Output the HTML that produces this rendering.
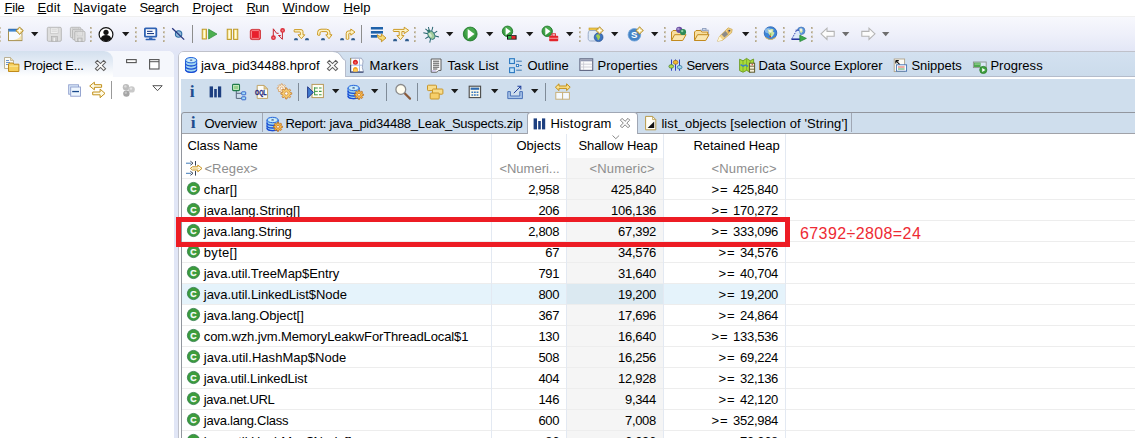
<!DOCTYPE html>
<html><head><meta charset="utf-8"><title>Eclipse Memory Analyzer</title>
<style>

html,body{margin:0;padding:0}
body{width:1135px;height:438px;overflow:hidden;background:#fff;position:relative;font-family:"Liberation Sans", "Noto Sans CJK SC", sans-serif;font-size:13px;color:#000}
.b{position:absolute}
.ic{position:absolute;overflow:visible}
.t{position:absolute;white-space:pre;line-height:16px;height:16px;font-size:13px}
.g{color:#8e8e8e}
u{text-decoration:underline;text-underline-offset:1px}

</style></head><body>
<div class="b" style="left:0px;top:0px;width:1135px;height:16px;background:#fff;"></div>
<div class="b" style="left:0px;top:16px;width:1135px;height:1px;background:#f0f0f0;"></div>
<div class="t " style="left:4.4px;top:0px;letter-spacing:-0.163px;"><u>F</u>ile</div>
<div class="t " style="left:37.4px;top:0px;letter-spacing:0.223px;"><u>E</u>dit</div>
<div class="t " style="left:73.4px;top:0px;letter-spacing:0.246px;"><u>N</u>avigate</div>
<div class="t " style="left:139.4px;top:0px;letter-spacing:-0.317px;">Se<u>a</u>rch</div>
<div class="t " style="left:192.4px;top:0px;letter-spacing:-0.024px;"><u>P</u>roject</div>
<div class="t " style="left:246.4px;top:0px;letter-spacing:-0.520px;"><u>R</u>un</div>
<div class="t " style="left:282.4px;top:0px;letter-spacing:0.175px;"><u>W</u>indow</div>
<div class="t " style="left:343.4px;top:0px;letter-spacing:0.138px;"><u>H</u>elp</div>
<div class="b" style="left:0px;top:17px;width:1135px;height:35px;background:linear-gradient(to bottom,#f7f8fd 0%,#eef0fa 50%,#e2e6f6 100%);"></div>
<div class="b" style="left:0px;top:52px;width:1135px;height:386px;background:#e1e6f6;"></div>
<svg class="ic" style="left:-0.8px;top:27px" width="2" height="15" viewBox="0 0 2 15"><rect x="0" y="0" width="2" height="1.8" fill="#b1a68b"/><rect x="1" y="0" width="1" height="1.8" fill="#cfc6b0"/><rect x="0" y="4.4" width="2" height="1.8" fill="#b1a68b"/><rect x="1" y="4.4" width="1" height="1.8" fill="#cfc6b0"/><rect x="0" y="8.8" width="2" height="1.8" fill="#b1a68b"/><rect x="1" y="8.8" width="1" height="1.8" fill="#cfc6b0"/><rect x="0" y="13.2" width="2" height="1.8" fill="#b1a68b"/><rect x="1" y="13.2" width="1" height="1.8" fill="#cfc6b0"/></svg>
<svg class="ic" style="left:8px;top:26px" width="16" height="16" viewBox="0 0 16 16"><rect x="0.5" y="3.4" width="13.4" height="11.2" fill="#f7fbff" stroke="#a8914e" stroke-width="1"/><rect x="0.4" y="2.9" width="13.6" height="2.7" fill="#3f86d0"/><rect x="0.4" y="2.9" width="13.6" height="0.8" fill="#2f6cb8"/><path d="M13.4 8.2v5.9h-9.4c5.2-0.4 8.4-2.6 9.4-5.9z" fill="#f4e3ae"/><path d="M11.6 0.9000000000000004Q13.1 3.2 15.399999999999999 4.7Q13.1 6.2 11.6 8.5Q10.1 6.2 7.8 4.7Q10.1 3.2 11.6 0.9000000000000004z" fill="#f2d57e" stroke="#b08a28" stroke-width="0.9"/><path d="M9.5 4.7h4.2M11.6 2.6v4.2" stroke="#fffdf0" stroke-width="1.3"/></svg>
<svg class="ic" style="left:31px;top:32px" width="8" height="5" viewBox="0 0 8 5"><path d="M0 0h7.4l-3.7 4.2z" fill="#1a1a1a"/></svg>
<svg class="ic" style="left:46px;top:26px" width="16" height="16" viewBox="0 0 16 16"><path d="M2.5 1.3H14.100000000000001Q15.3 1.3 15.3 2.5V14.100000000000001Q15.3 15.3 14.100000000000001 15.3H2.5Q1.3 15.3 1.3 14.100000000000001V2.5Q1.3 1.3 2.5 1.3z" fill="#dedede" stroke="#b2b2b2" stroke-width="0.9"/><rect x="4.5" y="1.9" width="7.6" height="5.4" fill="#efefef" stroke="#c2c2c2" stroke-width="0.6"/><path d="M5.7 3.7h5.2M5.7 5.3h5.2" stroke="#cfcfcf" stroke-width="0.7"/><rect x="5.3" y="10.5" width="6.0" height="4.6" fill="#cdcdcd" stroke="#ababab" stroke-width="0.6"/><rect x="7.5" y="11.700000000000001" width="1.5" height="3.4" fill="#efefef"/></svg>
<svg class="ic" style="left:69px;top:26px" width="16" height="16" viewBox="0 0 16 16"><path d="M2.5999999999999996 1.3H10.600000000000001Q11.8 1.3 11.8 2.5V10.500000000000002Q11.8 11.700000000000001 10.600000000000001 11.700000000000001H2.5999999999999996Q1.4 11.700000000000001 1.4 10.500000000000002V2.5Q1.4 1.3 2.5999999999999996 1.3z" fill="#dedede" stroke="#b2b2b2" stroke-width="0.9"/><rect x="3.777142857142857" y="1.9" width="5.645714285714286" height="4.011428571428572" fill="#e4e4e4" stroke="#c2c2c2" stroke-width="0.6"/><path d="M4.668571428571429 3.0828571428571427h3.862857142857143M4.668571428571429 4.271428571428571h3.862857142857143" stroke="#cfcfcf" stroke-width="0.7"/><rect x="4.371428571428572" y="8.134285714285713" width="4.457142857142857" height="3.417142857142857" fill="#cdcdcd" stroke="#ababab" stroke-width="0.6"/><rect x="6.005714285714285" y="9.025714285714287" width="1.1142857142857143" height="2.525714285714286" fill="#e4e4e4"/><path d="M4.8 3.3H12.8Q14.0 3.3 14.0 4.5V12.5Q14.0 13.7 12.8 13.7H4.8Q3.6 13.7 3.6 12.5V4.5Q3.6 3.3 4.8 3.3z" fill="#dedede" stroke="#b2b2b2" stroke-width="0.9"/><rect x="5.977142857142857" y="3.9" width="5.645714285714286" height="4.011428571428572" fill="#e4e4e4" stroke="#c2c2c2" stroke-width="0.6"/><path d="M6.868571428571429 5.082857142857143h3.862857142857143M6.868571428571429 6.271428571428571h3.862857142857143" stroke="#cfcfcf" stroke-width="0.7"/><rect x="6.571428571428571" y="10.134285714285713" width="4.457142857142857" height="3.417142857142857" fill="#cdcdcd" stroke="#ababab" stroke-width="0.6"/><rect x="8.205714285714286" y="11.025714285714287" width="1.1142857142857143" height="2.525714285714286" fill="#e4e4e4"/><path d="M7.0 5.3H14.8Q16.0 5.3 16.0 6.5V14.3Q16.0 15.5 14.8 15.5H7.0Q5.8 15.5 5.8 14.3V6.5Q5.8 5.3 7.0 5.3z" fill="#dedede" stroke="#b2b2b2" stroke-width="0.9"/><rect x="8.131428571428572" y="5.8999999999999995" width="5.5371428571428565" height="3.934285714285714" fill="#efefef" stroke="#c2c2c2" stroke-width="0.6"/><path d="M9.005714285714285 7.048571428571428h3.7885714285714287M9.005714285714285 8.214285714285714h3.7885714285714287" stroke="#cfcfcf" stroke-width="0.7"/><rect x="8.714285714285714" y="12.002857142857142" width="4.371428571428571" height="3.351428571428571" fill="#cdcdcd" stroke="#ababab" stroke-width="0.6"/><rect x="10.317142857142857" y="12.877142857142857" width="1.0928571428571427" height="2.477142857142857" fill="#efefef"/></svg>
<svg class="ic" style="left:90.2px;top:27px" width="2" height="15" viewBox="0 0 2 15"><rect x="0" y="0" width="2" height="1.8" fill="#b1a68b"/><rect x="1" y="0" width="1" height="1.8" fill="#cfc6b0"/><rect x="0" y="4.4" width="2" height="1.8" fill="#b1a68b"/><rect x="1" y="4.4" width="1" height="1.8" fill="#cfc6b0"/><rect x="0" y="8.8" width="2" height="1.8" fill="#b1a68b"/><rect x="1" y="8.8" width="1" height="1.8" fill="#cfc6b0"/><rect x="0" y="13.2" width="2" height="1.8" fill="#b1a68b"/><rect x="1" y="13.2" width="1" height="1.8" fill="#cfc6b0"/></svg>
<svg class="ic" style="left:98px;top:26px" width="16" height="16" viewBox="0 0 16 16"><circle cx="8" cy="8.5" r="6.9" fill="#fff" stroke="#111" stroke-width="1.2"/><circle cx="8" cy="6.3" r="2.6" fill="#111"/><path d="M2.8 12.6c0.8-3 2.6-3.6 5.2-3.6s4.4 0.6 5.2 3.6c-1.5 1.8-3.2 2.6-5.2 2.6s-3.7-0.8-5.2-2.6z" fill="#111"/></svg>
<svg class="ic" style="left:122px;top:32px" width="8" height="5" viewBox="0 0 8 5"><path d="M0 0h7.4l-3.7 4.2z" fill="#1a1a1a"/></svg>
<svg class="ic" style="left:135.3px;top:27px" width="2" height="15" viewBox="0 0 2 15"><rect x="0" y="0" width="2" height="1.8" fill="#b1a68b"/><rect x="1" y="0" width="1" height="1.8" fill="#cfc6b0"/><rect x="0" y="4.4" width="2" height="1.8" fill="#b1a68b"/><rect x="1" y="4.4" width="1" height="1.8" fill="#cfc6b0"/><rect x="0" y="8.8" width="2" height="1.8" fill="#b1a68b"/><rect x="1" y="8.8" width="1" height="1.8" fill="#cfc6b0"/><rect x="0" y="13.2" width="2" height="1.8" fill="#b1a68b"/><rect x="1" y="13.2" width="1" height="1.8" fill="#cfc6b0"/></svg>
<svg class="ic" style="left:143px;top:26px" width="16" height="16" viewBox="0 0 16 16"><rect x="1" y="1.5" width="13.2" height="10" rx="1.6" fill="#2f62b3"/><rect x="2.8" y="3.2" width="9.6" height="6.6" fill="#fafcff"/><rect x="4" y="4.8" width="5.5" height="1.1" fill="#1f3f86"/><rect x="4" y="7" width="7" height="1.1" fill="#1f3f86"/><rect x="6" y="11.5" width="3.4" height="1.4" fill="#2f62b3"/><rect x="2.6" y="12.7" width="10" height="1.6" rx="0.6" fill="#2f62b3"/></svg>
<svg class="ic" style="left:163.2px;top:27px" width="2" height="15" viewBox="0 0 2 15"><rect x="0" y="0" width="2" height="1.8" fill="#b1a68b"/><rect x="1" y="0" width="1" height="1.8" fill="#cfc6b0"/><rect x="0" y="4.4" width="2" height="1.8" fill="#b1a68b"/><rect x="1" y="4.4" width="1" height="1.8" fill="#cfc6b0"/><rect x="0" y="8.8" width="2" height="1.8" fill="#b1a68b"/><rect x="1" y="8.8" width="1" height="1.8" fill="#cfc6b0"/><rect x="0" y="13.2" width="2" height="1.8" fill="#b1a68b"/><rect x="1" y="13.2" width="1" height="1.8" fill="#cfc6b0"/></svg>
<svg class="ic" style="left:170px;top:26px" width="16" height="16" viewBox="0 0 16 16"><circle cx="8.6" cy="8" r="3.2" fill="#8fb9d9" stroke="#2f6ea5" stroke-width="1.1"/><path d="M2.2 2.2l12 11.4" stroke="#27357e" stroke-width="1.3" fill="none"/></svg>
<div class="b" style="left:192px;top:25px;width:1px;height:18px;background:#8d8d8d;"></div>
<svg class="ic" style="left:201px;top:26px" width="16" height="16" viewBox="0 0 16 16"><rect x="1.2" y="3.2" width="4.2" height="9.8" fill="#f7e389" stroke="#b8921e" stroke-width="0.9"/><rect x="2.6" y="4.2" width="1.4" height="7.8" fill="#fffbe0"/><path d="M7.6 3.2l8.4 4.9l-8.4 4.9z" fill="#4caf50" stroke="#2e8b3a" stroke-width="0.7"/></svg>
<svg class="ic" style="left:225px;top:26px" width="16" height="16" viewBox="0 0 16 16"><rect x="2.2" y="3.2" width="4.2" height="10.2" fill="#f7e389" stroke="#b8921e" stroke-width="0.9"/><rect x="3.6" y="4.2" width="1.4" height="8.2" fill="#fffbe0"/><rect x="8.6" y="3.2" width="4.2" height="10.2" fill="#f7e389" stroke="#b8921e" stroke-width="0.9"/><rect x="10" y="4.2" width="1.4" height="8.2" fill="#fffbe0"/></svg>
<svg class="ic" style="left:248px;top:26px" width="16" height="16" viewBox="0 0 16 16"><rect x="2.3" y="3.4" width="10.2" height="10.2" rx="1.6" fill="#e8202c" stroke="#d03a3e" stroke-width="0.9"/><rect x="3.5" y="4.6" width="7.8" height="7.8" rx="0.6" fill="none" stroke="#f7a2a4" stroke-width="0.8"/></svg>
<svg class="ic" style="left:270px;top:26px" width="16" height="16" viewBox="0 0 16 16"><path d="M3.3 11.7V2.8L6.6 7.3H8.6M8.4 9.5H10.8M8.6 9.5L12.4 13.3V4.4" stroke="#c8242e" stroke-width="1" fill="none"/><circle cx="3.45" cy="11.7" r="2.4" fill="#dc2e3a"/><circle cx="3.45" cy="11.7" r="1" fill="#f08088"/><circle cx="12.6" cy="4.4" r="2.4" fill="#dc2e3a"/><circle cx="12.6" cy="4.4" r="1" fill="#f08088"/></svg>
<svg class="ic" style="left:293px;top:26px" width="16" height="16" viewBox="0 0 16 16"><path d="M1.4 3.6H8Q10 3.6 10 5.6V8.8H11.8L8.4 12.7L5 8.8H7.4V6.6Q7.4 6 6.8 6H1.4Q0.7 4.8 1.4 3.6z" fill="#fdf3c6" stroke="#c9961c" stroke-width="0.95"/><path d="M0.9 14.3a2.1 2.4 0 0 1 4.2 0z" fill="#2f5c8e"/><path d="M11.9 14.3a2.1 2.4 0 0 1 4.2 0z" fill="#2f5c8e"/></svg>
<svg class="ic" style="left:317px;top:26px" width="16" height="16" viewBox="0 0 16 16"><path d="M0.6 9V6.4Q0.6 3.2 4 3.2H9.4Q13 3.2 13 6.6V8.8H15L12 12.7L8.8 8.8H10.6V7Q10.6 5.6 9 5.6H4.6Q3 5.6 3 7V9Q1.8 9.8 0.6 9z" fill="#fdf3c6" stroke="#c9961c" stroke-width="0.95"/><path d="M3.9 14.3a2.1 2.4 0 0 1 4.2 0z" fill="#2f5c8e"/></svg>
<svg class="ic" style="left:340px;top:26px" width="16" height="16" viewBox="0 0 16 16"><path d="M6.2 13V7.4Q6.2 4.9 8.8 4.9H10.8V3L15 6.1L10.8 9.2V7.3H9.4Q8.8 7.3 8.8 8V13Q7.5 13.8 6.2 13z" fill="#fdf3c6" stroke="#c9961c" stroke-width="0.95"/><path d="M0 14.3a2.1 2.4 0 0 1 4.2 0z" fill="#2f5c8e"/><path d="M11 14.3a2.1 2.4 0 0 1 4.2 0z" fill="#2f5c8e"/></svg>
<div class="b" style="left:361px;top:25px;width:1px;height:18px;background:#8d8d8d;"></div>
<svg class="ic" style="left:370px;top:26px" width="16" height="16" viewBox="0 0 16 16"><rect x="0.9" y="1" width="12.1" height="2.5" fill="#1f62aa"/><rect x="0.9" y="5" width="12.1" height="2.6" fill="#1f62aa"/><rect x="0.9" y="9" width="6.4" height="2.7" fill="#1f62aa"/><path d="M7.4 8.6Q8.2 10.6 11.4 10.4V8L16 12L11.4 15.8V13.4Q7.6 13.6 7.4 8.6z" fill="#f9dc78" stroke="#c08c1a" stroke-width="0.9"/></svg>
<svg class="ic" style="left:392px;top:26px" width="16" height="16" viewBox="0 0 16 16"><path d="M1.6 3.4H12.2V1.2L16.8 4.4L12.2 7.6V5.5H9.9V9.6H12L8.5 13.6L4.9 9.6H7.2V5.5H1.6Q0.8 4.4 1.6 3.4z" fill="#fdf3c6" stroke="#c9961c" stroke-width="0.95"/><path d="M1 15.2a2.1 2.4 0 0 1 4.2 0z" fill="#2f5c8e"/><path d="M12.9 15.2a2.1 2.4 0 0 1 4.2 0z" fill="#2f5c8e"/></svg>
<svg class="ic" style="left:414.2px;top:27px" width="2" height="15" viewBox="0 0 2 15"><rect x="0" y="0" width="2" height="1.8" fill="#b1a68b"/><rect x="1" y="0" width="1" height="1.8" fill="#cfc6b0"/><rect x="0" y="4.4" width="2" height="1.8" fill="#b1a68b"/><rect x="1" y="4.4" width="1" height="1.8" fill="#cfc6b0"/><rect x="0" y="8.8" width="2" height="1.8" fill="#b1a68b"/><rect x="1" y="8.8" width="1" height="1.8" fill="#cfc6b0"/><rect x="0" y="13.2" width="2" height="1.8" fill="#b1a68b"/><rect x="1" y="13.2" width="1" height="1.8" fill="#cfc6b0"/></svg>
<svg class="ic" style="left:423px;top:26px" width="16" height="16" viewBox="0 0 16 16"><g transform="rotate(-32 8 8.5)"><path d="M2.4 3l3.6 3.4M13.6 3l-3.6 3.4M1 9h4M15 9h-4M2.6 14.8l3.2-3.4M13.4 14.8l-3.2-3.4M6.2 0.8l1.2 3.4M9.8 0.8l-1.2 3.4" stroke="#1f5f68" stroke-width="0.95" fill="none"/><ellipse cx="8" cy="9.2" rx="3.1" ry="4.5" fill="#a2cc9c" stroke="#236e72" stroke-width="0.9"/><ellipse cx="7.2" cy="8.4" rx="1.1" ry="2.4" fill="#d4ead0"/><circle cx="8" cy="4.6" r="1.5" fill="#2f7a70"/></g></svg>
<svg class="ic" style="left:446px;top:32px" width="8" height="5" viewBox="0 0 8 5"><path d="M0 0h7.4l-3.7 4.2z" fill="#1a1a1a"/></svg>
<svg class="ic" style="left:462px;top:26px" width="16" height="16" viewBox="0 0 16 16"><circle cx="8.2" cy="8" r="6.9" fill="#379a3f" stroke="#22782e" stroke-width="0.9"/><circle cx="8.2" cy="6.62" r="5.106" fill="#52b054" opacity="0.65"/><path d="M5.715999999999999 2.894l6.7620000000000005 5.106l-6.7620000000000005 5.106z" fill="#fff"/></svg>
<svg class="ic" style="left:486px;top:32px" width="8" height="5" viewBox="0 0 8 5"><path d="M0 0h7.4l-3.7 4.2z" fill="#1a1a1a"/></svg>
<svg class="ic" style="left:502px;top:26px" width="16" height="16" viewBox="0 0 16 16"><circle cx="5.5" cy="5.3" r="5.2" fill="#379a3f" stroke="#22782e" stroke-width="0.9"/><circle cx="5.5" cy="4.26" r="3.848" fill="#52b054" opacity="0.65"/><path d="M3.628 1.452l5.096 3.848l-5.096 3.848z" fill="#fff"/><rect x="5" y="9.2" width="9.6" height="4.4" fill="#111"/><rect x="6" y="10" width="3.6" height="2.8" fill="#2fb84a"/><rect x="9.6" y="10" width="4" height="2.8" fill="#e3242b"/></svg>
<svg class="ic" style="left:526px;top:32px" width="8" height="5" viewBox="0 0 8 5"><path d="M0 0h7.4l-3.7 4.2z" fill="#1a1a1a"/></svg>
<svg class="ic" style="left:541px;top:26px" width="16" height="16" viewBox="0 0 16 16"><circle cx="6.2" cy="5.3" r="5.2" fill="#379a3f" stroke="#22782e" stroke-width="0.9"/><circle cx="6.2" cy="4.26" r="3.848" fill="#52b054" opacity="0.65"/><path d="M4.328 1.452l5.096 3.848l-5.096 3.848z" fill="#fff"/><rect x="8.2" y="9.8" width="9" height="5.4" rx="0.8" fill="#e3242b"/><rect x="11" y="7.8" width="3.4" height="2.4" fill="none" stroke="#e3242b" stroke-width="1"/><rect x="8.2" y="11.8" width="9" height="0.9" fill="#f9b0b0"/></svg>
<svg class="ic" style="left:566px;top:32px" width="8" height="5" viewBox="0 0 8 5"><path d="M0 0h7.4l-3.7 4.2z" fill="#1a1a1a"/></svg>
<svg class="ic" style="left:579.4px;top:27px" width="2" height="15" viewBox="0 0 2 15"><rect x="0" y="0" width="2" height="1.8" fill="#b1a68b"/><rect x="1" y="0" width="1" height="1.8" fill="#cfc6b0"/><rect x="0" y="4.4" width="2" height="1.8" fill="#b1a68b"/><rect x="1" y="4.4" width="1" height="1.8" fill="#cfc6b0"/><rect x="0" y="8.8" width="2" height="1.8" fill="#b1a68b"/><rect x="1" y="8.8" width="1" height="1.8" fill="#cfc6b0"/><rect x="0" y="13.2" width="2" height="1.8" fill="#b1a68b"/><rect x="1" y="13.2" width="1" height="1.8" fill="#cfc6b0"/></svg>
<svg class="ic" style="left:588px;top:26px" width="16" height="16" viewBox="0 0 16 16"><rect x="1" y="2" width="9" height="2.2" fill="#f0c84a" stroke="#b8921e" stroke-width="0.6"/><path d="M1.6 4.5c-1.2 1-1.4 2-1.4 4v4c0 1.5 0.8 2.5 2.4 2.5h5.6c1.6 0 2.4-1 2.4-2.5v-4c0-2-0.2-3-1.4-4z" fill="#dfe9f6" stroke="#8ea4c4" stroke-width="0.9"/><circle cx="10.6" cy="11.2" r="4.4" fill="#3d74c0" stroke="#27508e" stroke-width="0.7"/><path d="M8.5 9c1-1 2.5-0.8 3 0.2s1 1.5 0.4 2.6s-1 2.6-1.8 2.2s-0.4-1.8-1.2-2.6s-1-1.6-0.4-2.4z" fill="#9fcf4f"/><path d="M11.6 0.7000000000000002Q13.1 3.0 15.399999999999999 4.5Q13.1 6.0 11.6 8.3Q10.1 6.0 7.8 4.5Q10.1 3.0 11.6 0.7000000000000002z" fill="#f2d57e" stroke="#b08a28" stroke-width="0.9"/><path d="M9.5 4.5h4.2M11.6 2.4v4.2" stroke="#fffdf0" stroke-width="1.3"/></svg>
<svg class="ic" style="left:611px;top:32px" width="8" height="5" viewBox="0 0 8 5"><path d="M0 0h7.4l-3.7 4.2z" fill="#1a1a1a"/></svg>
<svg class="ic" style="left:627px;top:26px" width="16" height="16" viewBox="0 0 16 16"><circle cx="7.4" cy="8.8" r="6.3" fill="#4684c6" stroke="#6fa3d9" stroke-width="0.8"/><text x="7.2" y="12.3" font-family="Liberation Sans, sans-serif" font-weight="bold" font-size="9.6" fill="#fff" text-anchor="middle">S</text><path d="M12.6 0.7000000000000002Q14.1 3.0 16.4 4.5Q14.1 6.0 12.6 8.3Q11.1 6.0 8.8 4.5Q11.1 3.0 12.6 0.7000000000000002z" fill="#f2d57e" stroke="#b08a28" stroke-width="0.9"/><path d="M10.5 4.5h4.2M12.6 2.4v4.2" stroke="#fffdf0" stroke-width="1.3"/></svg>
<svg class="ic" style="left:651px;top:32px" width="8" height="5" viewBox="0 0 8 5"><path d="M0 0h7.4l-3.7 4.2z" fill="#1a1a1a"/></svg>
<svg class="ic" style="left:664.3px;top:27px" width="2" height="15" viewBox="0 0 2 15"><rect x="0" y="0" width="2" height="1.8" fill="#b1a68b"/><rect x="1" y="0" width="1" height="1.8" fill="#cfc6b0"/><rect x="0" y="4.4" width="2" height="1.8" fill="#b1a68b"/><rect x="1" y="4.4" width="1" height="1.8" fill="#cfc6b0"/><rect x="0" y="8.8" width="2" height="1.8" fill="#b1a68b"/><rect x="1" y="8.8" width="1" height="1.8" fill="#cfc6b0"/><rect x="0" y="13.2" width="2" height="1.8" fill="#b1a68b"/><rect x="1" y="13.2" width="1" height="1.8" fill="#cfc6b0"/></svg>
<svg class="ic" style="left:671px;top:26px" width="16" height="16" viewBox="0 0 16 16"><path d="M0.5 14.5v-8.5l1.5-1.5h4.62l1.2 1.5h5.88v2.4" fill="#f8dfa0" stroke="#c28a1e" stroke-width="1"/><path d="M0.5 14.5l3.08-5.8h11.479999999999999l-3.36 5.8z" fill="#fbe7b0" stroke="#c28a1e" stroke-width="1"/><circle cx="8.2" cy="3.8" r="3.1" fill="#6a4fa3"/><circle cx="7.4" cy="2.9" r="1.2" fill="#a995d0"/><circle cx="12" cy="6" r="3.1" fill="#2e8b57"/><circle cx="11.2" cy="5.1" r="1.2" fill="#8fd0a5"/></svg>
<svg class="ic" style="left:694px;top:26px" width="16" height="16" viewBox="0 0 16 16"><rect x="6.4" y="4.2" width="7.8" height="5.6" fill="#fbfcff" stroke="#8496b8" stroke-width="0.9"/><rect x="8.6" y="2.4" width="3.4" height="1.8" fill="#dfe6f4" stroke="#8496b8" stroke-width="0.8"/><path d="M0.5 14.5v-8.5l1.5-1.5h4.62l1.2 1.5h5.88v2.4" fill="#f8dfa0" stroke="#c28a1e" stroke-width="1"/><path d="M0.5 14.5l3.08-5.8h11.479999999999999l-3.36 5.8z" fill="#fbe7b0" stroke="#c28a1e" stroke-width="1"/></svg>
<svg class="ic" style="left:717px;top:26px" width="16" height="16" viewBox="0 0 16 16"><path d="M0.6 15.2l2-5l8.6-8.4l4 1.6l-0.6 3.4l-9 7.4z" fill="#f3d489" stroke="#c9a24a" stroke-width="0.7"/><path d="M0.6 15.2l2-5l3.2 3.8z" fill="#fff8d8"/><path d="M4.6 8.4l4-3.4l2.6 3.2l-3.8 3.2z" fill="#8a8a8a"/><path d="M10.4 3.6l3.4 1.2l-3 3.4z" fill="#d8a040"/><circle cx="12.4" cy="4.6" r="0.9" fill="#2a4a8a"/></svg>
<svg class="ic" style="left:742px;top:32px" width="8" height="5" viewBox="0 0 8 5"><path d="M0 0h7.4l-3.7 4.2z" fill="#1a1a1a"/></svg>
<svg class="ic" style="left:755.3px;top:27px" width="2" height="15" viewBox="0 0 2 15"><rect x="0" y="0" width="2" height="1.8" fill="#b1a68b"/><rect x="1" y="0" width="1" height="1.8" fill="#cfc6b0"/><rect x="0" y="4.4" width="2" height="1.8" fill="#b1a68b"/><rect x="1" y="4.4" width="1" height="1.8" fill="#cfc6b0"/><rect x="0" y="8.8" width="2" height="1.8" fill="#b1a68b"/><rect x="1" y="8.8" width="1" height="1.8" fill="#cfc6b0"/><rect x="0" y="13.2" width="2" height="1.8" fill="#b1a68b"/><rect x="1" y="13.2" width="1" height="1.8" fill="#cfc6b0"/></svg>
<svg class="ic" style="left:763px;top:26px" width="16" height="16" viewBox="0 0 16 16"><circle cx="7.5" cy="7" r="6.3" fill="#3c86d8" stroke="#2a62b0" stroke-width="0.8"/><ellipse cx="5.2" cy="4.6" rx="3.4" ry="2.6" fill="#9cc8f2" opacity="0.75"/><path d="M4.2 3l2.2 1l2-1.2l2.2 0.8l-0.6 2.2l1.6 1l-1.4 2.6l-1.8 2l-1.2-1.8l-1.8-2l0.2-2.2z" fill="#cfe4a4"/><path d="M5.6 3.6l1.6 0.8l1.2-0.6l0.4 1.6l-1.4 1l-1.6-0.8z" fill="#f6f8e8"/><path d="M7 7.2l1.4 0.4l-0.4 2.2l-0.8 1z" fill="#8cbf4a"/><path d="M2.4 11.4c3 2.6 7.2 2.6 10.2 0" stroke="#d8b864" stroke-width="1.1" fill="none"/><circle cx="7.2" cy="10.6" r="0.8" fill="#d82a2a"/></svg>
<svg class="ic" style="left:783.4px;top:27px" width="2" height="15" viewBox="0 0 2 15"><rect x="0" y="0" width="2" height="1.8" fill="#b1a68b"/><rect x="1" y="0" width="1" height="1.8" fill="#cfc6b0"/><rect x="0" y="4.4" width="2" height="1.8" fill="#b1a68b"/><rect x="1" y="4.4" width="1" height="1.8" fill="#cfc6b0"/><rect x="0" y="8.8" width="2" height="1.8" fill="#b1a68b"/><rect x="1" y="8.8" width="1" height="1.8" fill="#cfc6b0"/><rect x="0" y="13.2" width="2" height="1.8" fill="#b1a68b"/><rect x="1" y="13.2" width="1" height="1.8" fill="#cfc6b0"/></svg>
<svg class="ic" style="left:791px;top:26px" width="16" height="16" viewBox="0 0 16 16"><circle cx="10.2" cy="4.8" r="3.8" fill="#5a96dc" stroke="#3a6ab0" stroke-width="0.6"/><path d="M8.6 2.8l2.4 0.4l0.6 2l-1.4 2.2l-1.4-2z" fill="#d4e6a4"/><circle cx="10" cy="3.8" r="1.5" fill="#f6f4dc" opacity="0.9"/><path d="M5.6 4.4l-4.6 8.4h9.4l-2.6-8.4z" fill="#dce8fa"/><path d="M5.4 4.6l-4.4 8" stroke="#2238a8" stroke-width="0.9" stroke-dasharray="1.6 1" fill="none"/><path d="M0.4 13.2h8.6" stroke="#1a2c9a" stroke-width="1.5"/><path d="M4.6 4.2h3.6" stroke="#2238a8" stroke-width="0.9"/><path d="M8.8 9.2l6.6 3.2l-6.6 3.2z" fill="#3cab4a" stroke="#1f8030" stroke-width="0.7"/></svg>
<svg class="ic" style="left:811.2px;top:27px" width="2" height="15" viewBox="0 0 2 15"><rect x="0" y="0" width="2" height="1.8" fill="#b1a68b"/><rect x="1" y="0" width="1" height="1.8" fill="#cfc6b0"/><rect x="0" y="4.4" width="2" height="1.8" fill="#b1a68b"/><rect x="1" y="4.4" width="1" height="1.8" fill="#cfc6b0"/><rect x="0" y="8.8" width="2" height="1.8" fill="#b1a68b"/><rect x="1" y="8.8" width="1" height="1.8" fill="#cfc6b0"/><rect x="0" y="13.2" width="2" height="1.8" fill="#b1a68b"/><rect x="1" y="13.2" width="1" height="1.8" fill="#cfc6b0"/></svg>
<svg class="ic" style="left:819.5px;top:26px" width="16" height="16" viewBox="0 0 16 16"><path d="M1 7.8l6-5.6v3.2h7.2v4.8h-7.2v3.2z" fill="#fcfcfc" stroke="#b4b4b4" stroke-width="1.1"/></svg>
<svg class="ic" style="left:842px;top:32px" width="8" height="5" viewBox="0 0 8 5"><path d="M0 0h7.4l-3.7 4.2z" fill="#6e6e6e"/></svg>
<svg class="ic" style="left:860px;top:26px" width="16" height="16" viewBox="0 0 16 16"><path d="M15 7.8l-6-5.6v3.2h-7.2v4.8h7.2v3.2z" fill="#fcfcfc" stroke="#b4b4b4" stroke-width="1.1"/></svg>
<svg class="ic" style="left:882px;top:32px" width="8" height="5" viewBox="0 0 8 5"><path d="M0 0h7.4l-3.7 4.2z" fill="#6e6e6e"/></svg>
<div class="b" style="left:-1px;top:51px;width:175px;height:400px;background:#fff;border-top-right-radius:6px"></div>
<div class="b" style="left:-1px;top:51px;width:175px;height:26px;background:#f5f7fc;border-top-right-radius:6px"></div>
<div class="b" style="left:-1px;top:51px;width:114px;height:27px;background:linear-gradient(to bottom,#d3e0ee 0%,#e6edf6 45%,#ffffff 95%);border-top-right-radius:9px"></div>
<svg class="ic" style="left:4px;top:57px" width="16" height="16" viewBox="0 0 16 16"><path d="M0.5 0.5h6l3 3v8h-9z" fill="#fbfbf4" stroke="#b5a98a" stroke-width="0.9"/><path d="M6.5 0.5v3h3" fill="#e8dcb0" stroke="#b5a98a" stroke-width="0.7"/><path d="M2 3.5h3M2 5.5h4M2 7.5h3" stroke="#5a86c8" stroke-width="0.9"/><path d="M4.5 14.5v-7.5l1-1h3.4l1 1.2h5v7.3z" fill="#f6cf5a" stroke="#c08a1a" stroke-width="1"/><path d="M5.4 9.2h8.8" stroke="#fbe9a0" stroke-width="1"/></svg>
<div class="t " style="left:23.4px;top:58px;letter-spacing:-0.273px;">Project E...</div>
<svg class="ic" style="left:94.5px;top:59.5px" width="11" height="11" viewBox="0 0 11 11"><path d="M0.4 2.3l1.9-1.9l3.2 3.2l3.2-3.2l1.9 1.9l-3.2 3.2l3.2 3.2l-1.9 1.9l-3.2-3.2l-3.2 3.2l-1.9-1.9l3.2-3.2z" fill="#fdfdfd" stroke="#5e5e5e" stroke-width="1.05"/></svg>
<svg class="ic" style="left:126px;top:59px" width="11" height="5" viewBox="0 0 11 5"><rect x="0.6" y="0.6" width="9.6" height="3" fill="#fff" stroke="#555" stroke-width="1.1"/></svg>
<svg class="ic" style="left:149px;top:59px" width="11" height="11" viewBox="0 0 11 11"><rect x="0.6" y="0.6" width="9.4" height="9.4" fill="#fff" stroke="#555" stroke-width="1.1"/><rect x="0.6" y="2.2" width="9.4" height="1" fill="#555"/></svg>
<svg class="ic" style="left:68px;top:84px" width="16" height="16" viewBox="0 0 16 16"><rect x="0.7" y="0.8" width="9.8" height="9.4" fill="#dcebfa" stroke="#8c9ccc" stroke-width="0.9"/><rect x="2.7" y="3" width="9.8" height="9.2" fill="#eef6fe" stroke="#8c9ccc" stroke-width="0.9"/><rect x="4.2" y="6.9" width="6.8" height="1.3" fill="#1a4a8c"/></svg>
<svg class="ic" style="left:89px;top:82px" width="16" height="16" viewBox="0 0 16 16"><path d="M0.7 4l4.7-3.8v2.5h7.2v2.6h-7.2v2.5z" fill="#fffbe6" stroke="#c2901a" stroke-width="1"/><path d="M16 11.4l-4.9-4.3v2.9h-7.4v2.8h7.4v2.9z" fill="#fffbe6" stroke="#c2901a" stroke-width="1"/></svg>
<div class="b" style="left:111px;top:81px;width:1px;height:18px;background:#9a9a9a;"></div>
<svg class="ic" style="left:121px;top:83px" width="16" height="16" viewBox="0 0 16 16"><circle cx="5" cy="4.2" r="3.2" fill="#bdbdbd"/><circle cx="10.6" cy="6.4" r="3.2" fill="#c9c9c9"/><circle cx="5.4" cy="10.6" r="3.2" fill="#a5a5a5"/><circle cx="4.4" cy="3.4" r="1.2" fill="#dcdcdc"/><circle cx="10" cy="5.6" r="1.2" fill="#e4e4e4"/><circle cx="4.8" cy="9.8" r="1.2" fill="#c4c4c4"/></svg>
<svg class="ic" style="left:151.5px;top:84.8px" width="11" height="7" viewBox="0 0 11 7"><path d="M0.8 0.7h9.4l-4.7 5z" fill="#fff" stroke="#555" stroke-width="1"/></svg>
<div class="b" style="left:178px;top:51px;width:970px;height:400px;background:#fff;border:1px solid #bfc1ca;border-top-left-radius:6px;box-sizing:border-box"></div>
<div class="b" style="left:181px;top:52px;width:970px;height:400px;background:#cfdeed"></div>
<div class="b" style="left:181px;top:52px;width:970px;height:25px;background:linear-gradient(to bottom,#d3e1f0,#cbdbeb);"></div>
<div class="b" style="left:341px;top:76px;width:800px;height:1px;background:#b4bccb;"></div>
<div class="b" style="left:179px;top:77px;width:960px;height:2px;background:#fff;"></div>
<svg class="ic" style="left:179px;top:51px" width="175" height="27" viewBox="0 0 175 27"><path d="M0 27V6Q0 1 5 1H154Q159 1 161.5 5Q164 9 166.5 9.5V27z" fill="#fff"/><path d="M154 0.5Q159.5 0.5 162 5Q164 9 166.5 9.5V26" fill="none" stroke="#b6bccc" stroke-width="1"/></svg>
<svg class="ic" style="left:184px;top:56px" width="16" height="16" viewBox="0 0 16 16"><path d="M1.5 4.2V13.8a5.6 2.6 0 0 0 11.2 0V4.2z" fill="#a2d8f0" stroke="#2463dc" stroke-width="1"/><path d="M1.5 7.4a5.6 2.6 0 0 0 11.2 0" fill="none" stroke="#1a4cd4" stroke-width="1.3"/><path d="M1.5 10.600000000000001a5.6 2.6 0 0 0 11.2 0" fill="none" stroke="#1a4cd4" stroke-width="1.3"/><path d="M1.5 13.8a5.6 2.6 0 0 0 11.2 0" fill="none" stroke="#1a4cd4" stroke-width="1.3"/><ellipse cx="7.1" cy="4.2" rx="5.6" ry="2.7" fill="#b6e2f6" stroke="#2463dc" stroke-width="1"/><ellipse cx="7.1" cy="4.2" rx="3.5999999999999996" ry="1.5" fill="#d2eefa"/><ellipse cx="7.1" cy="4.1000000000000005" rx="1.4" ry="0.7" fill="#2a4a8a"/></svg>
<div class="t " style="left:200.9px;top:58px;letter-spacing:0.049px;">java_pid34488.hprof</div>
<svg class="ic" style="left:326.5px;top:59.5px" width="11" height="11" viewBox="0 0 11 11"><path d="M0.4 2.3l1.9-1.9l3.2 3.2l3.2-3.2l1.9 1.9l-3.2 3.2l3.2 3.2l-1.9 1.9l-3.2-3.2l-3.2 3.2l-1.9-1.9l3.2-3.2z" fill="#fdfdfd" stroke="#5e5e5e" stroke-width="1.05"/></svg>
<svg class="ic" style="left:350px;top:57.5px" width="16" height="16" viewBox="0 0 16 16"><path d="M0.6 0.2H11.4Q14.2 2.6 12.6 6.4Q11.6 9.4 13.6 14H0.6z" fill="#fdfeff" stroke="#8e98b4" stroke-width="0.8"/><path d="M9.5 0.4V14M0.6 7.2H12.4" stroke="#a9bde2" stroke-width="1"/><path d="M0.6 0V7" stroke="#9c9058" stroke-width="1.2"/><path d="M0.6 7V14.2H13.4" stroke="#3c4a74" stroke-width="1.2" fill="none"/><circle cx="5.4" cy="4.2" r="2.5" fill="#dc2424"/><circle cx="5.4" cy="4.6" r="1.1" fill="#ee6a6a"/><path d="M3 13.4v-2c0-1.5 1-2.4 2.4-2.4s2.4 0.9 2.4 2.4v2z" fill="#f6a31c"/><path d="M3.8 13.4v-1.2c0-0.9 0.7-1.4 1.6-1.4s1.6 0.5 1.6 1.4v1.2z" fill="#fcd05a"/></svg>
<div class="t " style="left:369.4px;top:58px;letter-spacing:0.335px;">Markers</div>
<svg class="ic" style="left:430px;top:57.5px" width="16" height="16" viewBox="0 0 16 16"><path d="M1.2 1h9.8v11.4h-2.2c-0.8 0-1 1.8-2.6 1.8h-5z" fill="#fff" stroke="#5a5a5a" stroke-width="1"/><path d="M1.8 13.6c1.8 0.5 4 0.2 4.6-1.4h-4.6z" fill="#c4bce6"/><path d="M3 3.2h6.2M3 5.2h6.2M3 7.2h6.2M3 9.2h6.2M3 11h4.4" stroke="#3a3a3a" stroke-width="0.9"/></svg>
<div class="t " style="left:447.4px;top:58px;letter-spacing:0.080px;">Task List</div>
<svg class="ic" style="left:508px;top:56.8px" width="16" height="16" viewBox="0 0 16 16"><rect x="1.6" y="1.7" width="4.8" height="4.8" fill="#c4e4fa" stroke="#2a78c0" stroke-width="1.1"/><rect x="1.6" y="10.8" width="4.8" height="4.8" fill="#c4e4fa" stroke="#2a78c0" stroke-width="1.1"/><rect x="8.4" y="7.4" width="2.2" height="2.2" fill="#fff" stroke="#2a78c0" stroke-width="0.9"/><path d="M8.2 4.2h5.6M11.6 8.5h2.2M8.2 13.2h5.6" stroke="#3a78b0" stroke-width="1"/></svg>
<div class="t " style="left:527.4px;top:58px;letter-spacing:0.014px;">Outline</div>
<svg class="ic" style="left:579px;top:56.7px" width="16" height="16" viewBox="0 0 16 16"><rect x="0.9" y="1.8" width="12.8" height="11.6" fill="#fbfbfc" stroke="#5e6580" stroke-width="1.1"/><rect x="1.4" y="2.3" width="11.8" height="2" fill="#9298b0"/><path d="M4.6 4.4v8.6M1.4 7.2h11.8M1.4 10h11.8" stroke="#c8c8d0" stroke-width="0.8"/></svg>
<div class="t " style="left:597.4px;top:58px;letter-spacing:0.103px;">Properties</div>
<svg class="ic" style="left:668px;top:57.5px" width="16" height="16" viewBox="0 0 16 16"><path d="M3.5 1.5v11.2M7.5 1.5v11.2M11.5 1.5v11.2" stroke="#2a3ec4" stroke-width="1"/><ellipse cx="3.3" cy="8.4" rx="2.4" ry="1.8" fill="#b8d848" stroke="#3a7a3a" stroke-width="0.7"/><ellipse cx="7.6" cy="4.3" rx="2.4" ry="2" fill="#f2b830" stroke="#9a6a1a" stroke-width="0.7"/><ellipse cx="11.6" cy="9.2" rx="2.4" ry="1.8" fill="#9cd8e8" stroke="#2a6a9a" stroke-width="0.7"/></svg>
<div class="t " style="left:686.4px;top:58px;letter-spacing:-0.357px;">Servers</div>
<svg class="ic" style="left:739px;top:57.5px" width="16" height="16" viewBox="0 0 16 16"><path d="M0.6 1.2l3.4 1.6l3.6-2.4l3.6 2.4l3.4-1.8v11.6l-3.4 1.6l-3.6-1.8l-3.6 1.8l-3.4-1.6z" fill="#aadc3a" stroke="#6a9a22" stroke-width="0.9"/><path d="M4 2.8v11.4M7.6 0.6v11.6M11.2 2.8v4" stroke="#7aac28" stroke-width="0.9"/><path d="M1.6 6.6l2.6 1.6l2.2-1.2l2.6 1.4" stroke="#3a82c8" stroke-width="1.4" fill="none"/><rect x="10.4" y="5.2" width="5.2" height="9" fill="#f6f0dc" stroke="#5e5a2e" stroke-width="1"/><path d="M10.4 8.2h5.2M10.4 11.2h5.2" stroke="#5e5a2e" stroke-width="0.9"/><rect x="12.6" y="6.2" width="1.4" height="1" fill="#d83a2a"/></svg>
<div class="t " style="left:758.4px;top:58px;letter-spacing:-0.001px;">Data Source Explorer</div>
<svg class="ic" style="left:893px;top:57.5px" width="16" height="16" viewBox="0 0 16 16"><rect x="1.2" y="1" width="10.4" height="12.6" fill="#fdfcf6" stroke="#b0a48a" stroke-width="0.9"/><path d="M2.8 2.6l4 4M2.8 2.6h3M2.8 2.6v3" stroke="#111" stroke-width="1.1" fill="none"/><rect x="3.4" y="6.8" width="10.2" height="6.4" fill="#fdfdff" stroke="#3f6fb0" stroke-width="0.9"/><path d="M5 9h6.6" stroke="#e05a4a" stroke-width="1"/><path d="M5 11h6.6" stroke="#4aa85a" stroke-width="1"/></svg>
<div class="t " style="left:911.4px;top:58px;letter-spacing:-0.039px;">Snippets</div>
<svg class="ic" style="left:972px;top:57.5px" width="16" height="16" viewBox="0 0 16 16"><rect x="1.4" y="4" width="12.8" height="5.6" fill="#dbe8f6" stroke="#8a938a" stroke-width="0.9"/><rect x="2" y="4.6" width="6.6" height="4.4" fill="#4fa84f"/><rect x="2.6" y="5.6" width="5.4" height="0.9" fill="#b4e0b0"/><circle cx="11.3" cy="11.9" r="3.6" fill="#3fa03f" stroke="#2a7a2a" stroke-width="0.7"/><path d="M10.2 9.9l3.2 2l-3.2 2z" fill="#fff"/></svg>
<div class="t " style="left:990.4px;top:58px;letter-spacing:0.034px;">Progress</div>
<svg class="ic" style="left:188px;top:83px" width="16" height="16" viewBox="0 0 16 16"><text x="4.3" y="13.7" font-family="Liberation Serif, serif" font-weight="bold" font-size="17.5" fill="#1f4e8f" text-anchor="middle">i</text></svg>
<svg class="ic" style="left:207px;top:83px" width="16" height="16" viewBox="0 0 16 16"><rect x="2.6" y="3.4" width="3.4" height="11" fill="#1d3f80"/><rect x="7.2" y="6" width="2.6" height="8.4" fill="#1d3f80"/><rect x="11" y="3.4" width="3.2" height="11" fill="#1d3f80"/></svg>
<svg class="ic" style="left:232px;top:83px" width="16" height="16" viewBox="0 0 16 16"><path d="M4.3 7.8V15.4H9.4M4.3 10.3H9.4" stroke="#56657c" stroke-width="1" fill="none"/><rect x="0.6" y="1.4" width="6.9" height="6.2" rx="0.9" fill="#94cf8a" stroke="#1f7a4a" stroke-width="1.1"/><rect x="1.7" y="2.5" width="4.7" height="4" fill="none" stroke="#d8f0d0" stroke-width="0.7"/><rect x="9.7" y="8.8" width="4" height="3" rx="0.5" fill="#a8e0f8" stroke="#2a5ac8" stroke-width="0.9"/><rect x="9.7" y="13.8" width="4" height="3" rx="0.5" fill="#a8e0f8" stroke="#2a5ac8" stroke-width="0.9"/></svg>
<svg class="ic" style="left:254px;top:83px" width="16" height="16" viewBox="0 0 16 16"><path d="M3.2 2.4h6.8l3.6 3.6v9.4h-10.4z" fill="#fdfdf8" stroke="#c0a468" stroke-width="1"/><path d="M10 2.4v3.6h3.6z" fill="#e8cf90" stroke="#c0a468" stroke-width="0.7"/><text x="6.8" y="12.4" font-family="Liberation Sans, sans-serif" font-weight="bold" font-size="7.4" fill="#1c247c" stroke="#1c247c" stroke-width="0.3" text-anchor="middle" textLength="11.6" lengthAdjust="spacingAndGlyphs">OQL</text></svg>
<svg class="ic" style="left:277px;top:83px" width="16" height="16" viewBox="0 0 16 16"><path d="M9.16 4.72 L9.16 5.88 L7.83 6.14 L7.51 6.92 L8.27 8.04 L7.44 8.87 L6.32 8.11 L5.54 8.43 L5.28 9.76 L4.12 9.76 L3.86 8.43 L3.08 8.11 L1.96 8.87 L1.13 8.04 L1.89 6.92 L1.57 6.14 L0.24 5.88 L0.24 4.72 L1.57 4.46 L1.89 3.68 L1.13 2.56 L1.96 1.73 L3.08 2.49 L3.86 2.17 L4.12 0.84 L5.28 0.84 L5.54 2.17 L6.32 2.49 L7.44 1.73 L8.27 2.56 L7.51 3.68 L7.83 4.46z" fill="#fdf0d6" stroke="#d29a62" stroke-width="0.8"/><circle cx="4.7" cy="5.3" r="1.3499999999999999" fill="#fff" stroke="#d29a62" stroke-width="0.7"/><path d="M14.75 9.79 L14.75 11.21 L13.12 11.53 L12.73 12.48 L13.66 13.85 L12.65 14.86 L11.28 13.93 L10.33 14.32 L10.01 15.95 L8.59 15.95 L8.27 14.32 L7.32 13.93 L5.95 14.86 L4.94 13.85 L5.87 12.48 L5.48 11.53 L3.85 11.21 L3.85 9.79 L5.48 9.47 L5.87 8.52 L4.94 7.15 L5.95 6.14 L7.32 7.07 L8.27 6.68 L8.59 5.05 L10.01 5.05 L10.33 6.68 L11.28 7.07 L12.65 6.14 L13.66 7.15 L12.73 8.52 L13.12 9.47z" fill="#f7cc6c" stroke="#c47c34" stroke-width="0.8"/><circle cx="9.3" cy="10.5" r="1.65" fill="#fff" stroke="#c47c34" stroke-width="0.7"/></svg>
<div class="b" style="left:298px;top:83px;width:1px;height:18px;background:#7f8b98;"></div>
<svg class="ic" style="left:307px;top:83px" width="16" height="16" viewBox="0 0 16 16"><rect x="5" y="1.4" width="11.4" height="13.2" fill="#fffef4" stroke="#b89a5a" stroke-width="1"/><path d="M7.6 4.2v8M7.6 5h3.2M7.6 8.4h3.2M7.6 11.8h3.2" stroke="#3f9a4a" stroke-width="1" fill="none"/><path d="M12 5h2.6M12 8.4h2.6M12 11.8h2.6" stroke="#3f9a4a" stroke-width="1.1"/><path d="M0.6 3.8l5.8 5.6l-5.8 5.6z" fill="#3f7ad0" stroke="#1a2f80" stroke-width="0.9"/></svg>
<svg class="ic" style="left:332px;top:89px" width="8" height="5" viewBox="0 0 8 5"><path d="M0 0h7.4l-3.7 4.2z" fill="#1a1a1a"/></svg>
<svg class="ic" style="left:347px;top:83px" width="16" height="16" viewBox="0 0 16 16"><path d="M1 5V13.100000000000001a5.6 2.6 0 0 0 11.2 0V5z" fill="#a2d8f0" stroke="#2463dc" stroke-width="1"/><path d="M1 7.7a5.6 2.6 0 0 0 11.2 0" fill="none" stroke="#1a4cd4" stroke-width="1.3"/><path d="M1 10.4a5.6 2.6 0 0 0 11.2 0" fill="none" stroke="#1a4cd4" stroke-width="1.3"/><path d="M1 13.100000000000001a5.6 2.6 0 0 0 11.2 0" fill="none" stroke="#1a4cd4" stroke-width="1.3"/><ellipse cx="6.6" cy="5" rx="5.6" ry="2.7" fill="#b6e2f6" stroke="#2463dc" stroke-width="1"/><ellipse cx="6.6" cy="5" rx="3.5999999999999996" ry="1.5" fill="#d2eefa"/><ellipse cx="6.6" cy="4.9" rx="1.4" ry="0.7" fill="#2a4a8a"/><path d="M16.56 11.20 L16.56 12.40 L15.20 12.66 L14.87 13.45 L15.65 14.60 L14.80 15.45 L13.65 14.67 L12.86 15.00 L12.60 16.36 L11.40 16.36 L11.14 15.00 L10.35 14.67 L9.20 15.45 L8.35 14.60 L9.13 13.45 L8.80 12.66 L7.44 12.40 L7.44 11.20 L8.80 10.94 L9.13 10.15 L8.35 9.00 L9.20 8.15 L10.35 8.93 L11.14 8.60 L11.40 7.24 L12.60 7.24 L12.86 8.60 L13.65 8.93 L14.80 8.15 L15.65 9.00 L14.87 10.15 L15.20 10.94z" fill="#f6b84a" stroke="#b86a1a" stroke-width="0.8"/><circle cx="12" cy="11.8" r="1.38" fill="#fff" stroke="#b86a1a" stroke-width="0.7"/></svg>
<svg class="ic" style="left:371px;top:89px" width="8" height="5" viewBox="0 0 8 5"><path d="M0 0h7.4l-3.7 4.2z" fill="#1a1a1a"/></svg>
<div class="b" style="left:386px;top:83px;width:1px;height:18px;background:#7f8b98;"></div>
<svg class="ic" style="left:395px;top:83px" width="16" height="16" viewBox="0 0 16 16"><path d="M9.4 10l5.6 5.6" stroke="#8a5a3a" stroke-width="2.2" stroke-linecap="round"/><circle cx="5.8" cy="6.4" r="4.9" fill="#fffdf0" stroke="#8a8a8a" stroke-width="1.3"/></svg>
<div class="b" style="left:417px;top:83px;width:1px;height:18px;background:#7f8b98;"></div>
<svg class="ic" style="left:427px;top:83px" width="16" height="16" viewBox="0 0 16 16"><rect x="0.5" y="2.2" width="9" height="5.4" rx="0.8" fill="#f8dc8a" stroke="#c8962a" stroke-width="1"/><rect x="5.5" y="6" width="10.4" height="5.2" rx="0.8" fill="#f8dc8a" stroke="#c8962a" stroke-width="1"/><rect x="3.2" y="10" width="9" height="6" rx="0.8" fill="#f6cf6a" stroke="#c8962a" stroke-width="1"/></svg>
<svg class="ic" style="left:451px;top:89px" width="8" height="5" viewBox="0 0 8 5"><path d="M0 0h7.4l-3.7 4.2z" fill="#1a1a1a"/></svg>
<svg class="ic" style="left:468px;top:83px" width="16" height="16" viewBox="0 0 16 16"><rect x="1.2" y="3.2" width="11.4" height="11.4" fill="#fbf8e8" stroke="#4a4a4a" stroke-width="1.1"/><rect x="2.6" y="4.6" width="8.6" height="2.2" fill="#2f6ab0"/><path d="M3.4 9.2h1.8M6 9.2h1.8M8.6 9.2h1.8M3.4 12h1.8M6 12h1.8M8.6 12h1.8" stroke="#3a7ac0" stroke-width="1.6"/></svg>
<svg class="ic" style="left:490.6px;top:89px" width="8" height="5" viewBox="0 0 8 5"><path d="M0 0h7.4l-3.7 4.2z" fill="#1a1a1a"/></svg>
<svg class="ic" style="left:507px;top:83px" width="16" height="16" viewBox="0 0 16 16"><path d="M0.8 8.6v7h14.6v-7h-2.6v4.4h-9.4v-4.4z" fill="#a8c4e8" stroke="#4a72b8" stroke-width="1"/><path d="M6.8 10.2l6.8-6.8" stroke="#1f3f9a" stroke-width="1"/><path d="M10.4 3.2h3.4v3.4" stroke="#1f3f9a" stroke-width="1.1" fill="none"/></svg>
<svg class="ic" style="left:530.7px;top:89px" width="8" height="5" viewBox="0 0 8 5"><path d="M0 0h7.4l-3.7 4.2z" fill="#1a1a1a"/></svg>
<div class="b" style="left:545px;top:83px;width:1px;height:18px;background:#7f8b98;"></div>
<svg class="ic" style="left:555px;top:83px" width="16" height="16" viewBox="0 0 16 16"><path d="M0.4 4.2l3.6-3.4v2.2h7.6v-2.2l3.6 3.4l-3.6 3.4v-2.2h-7.6v2.2z" fill="#fbe08a" stroke="#c2901a" stroke-width="1"/><rect x="0.8" y="9.4" width="6.8" height="6.8" fill="#f4f9ff" stroke="#c8b07a" stroke-width="1"/><rect x="7.6" y="9.4" width="6.8" height="6.8" fill="#f4f9ff" stroke="#c8b07a" stroke-width="1"/></svg>
<div class="b" style="left:181px;top:112px;width:970px;height:340px;border:1px solid #92969e;border-top-left-radius:3px;box-sizing:border-box"></div>
<div class="b" style="left:182px;top:133px;width:960px;height:1px;background:#a0a2a8;"></div>
<div class="b" style="left:182px;top:134px;width:960px;height:310px;background:#fff;"></div>
<svg class="ic" style="left:188.7px;top:114.2px" width="16" height="16" viewBox="0 0 16 16"><text x="4.3" y="13.7" font-family="Liberation Serif, serif" font-weight="bold" font-size="17.5" fill="#1f4e8f" text-anchor="middle">i</text></svg>
<div class="t " style="left:204.4px;top:116px;letter-spacing:-0.236px;">Overview</div>
<div class="b" style="left:262px;top:113px;width:1px;height:19px;background:#a0a7b4;"></div>
<svg class="ic" style="left:266px;top:115px" width="16" height="16" viewBox="0 0 16 16"><path d="M1 5V13.100000000000001a5.6 2.6 0 0 0 11.2 0V5z" fill="#a2d8f0" stroke="#2463dc" stroke-width="1"/><path d="M1 7.7a5.6 2.6 0 0 0 11.2 0" fill="none" stroke="#1a4cd4" stroke-width="1.3"/><path d="M1 10.4a5.6 2.6 0 0 0 11.2 0" fill="none" stroke="#1a4cd4" stroke-width="1.3"/><path d="M1 13.100000000000001a5.6 2.6 0 0 0 11.2 0" fill="none" stroke="#1a4cd4" stroke-width="1.3"/><ellipse cx="6.6" cy="5" rx="5.6" ry="2.7" fill="#b6e2f6" stroke="#2463dc" stroke-width="1"/><ellipse cx="6.6" cy="5" rx="3.5999999999999996" ry="1.5" fill="#d2eefa"/><ellipse cx="6.6" cy="4.9" rx="1.4" ry="0.7" fill="#2a4a8a"/><path d="M16.56 11.20 L16.56 12.40 L15.20 12.66 L14.87 13.45 L15.65 14.60 L14.80 15.45 L13.65 14.67 L12.86 15.00 L12.60 16.36 L11.40 16.36 L11.14 15.00 L10.35 14.67 L9.20 15.45 L8.35 14.60 L9.13 13.45 L8.80 12.66 L7.44 12.40 L7.44 11.20 L8.80 10.94 L9.13 10.15 L8.35 9.00 L9.20 8.15 L10.35 8.93 L11.14 8.60 L11.40 7.24 L12.60 7.24 L12.86 8.60 L13.65 8.93 L14.80 8.15 L15.65 9.00 L14.87 10.15 L15.20 10.94z" fill="#f6b84a" stroke="#b86a1a" stroke-width="0.8"/><circle cx="12" cy="11.8" r="1.38" fill="#fff" stroke="#b86a1a" stroke-width="0.7"/></svg>
<div class="t " style="left:285.4px;top:116px;letter-spacing:-0.256px;">Report: java_pid34488_Leak_Suspects.zip</div>
<div class="b" style="left:527px;top:112px;width:111px;height:22px;background:#fff;border:1px solid #a0a7b4;border-bottom:none;border-radius:4px 4px 0 0;box-sizing:border-box"></div>
<svg class="ic" style="left:531.4px;top:115px" width="16" height="16" viewBox="0 0 16 16"><rect x="2.6" y="3.4" width="3.4" height="11" fill="#1d3f80"/><rect x="7.2" y="6" width="2.6" height="8.4" fill="#1d3f80"/><rect x="11" y="3.4" width="3.2" height="11" fill="#1d3f80"/></svg>
<div class="t " style="left:550.4px;top:116px;letter-spacing:0.228px;">Histogram</div>
<svg class="ic" style="left:619.5px;top:118.3px" width="11" height="11" viewBox="0 0 11 11"><g transform="scale(0.92)"><path d="M0.4 2.3l1.9-1.9l3.2 3.2l3.2-3.2l1.9 1.9l-3.2 3.2l3.2 3.2l-1.9 1.9l-3.2-3.2l-3.2 3.2l-1.9-1.9l3.2-3.2z" fill="#fdfdfd" stroke="#707070" stroke-width="0.95"/></g></svg>
<svg class="ic" style="left:645px;top:115px" width="16" height="16" viewBox="0 0 16 16"><path d="M0.6 1.4h7l3.2 3.2v10.2h-10.2z" fill="#fffef6" stroke="#b89a4a" stroke-width="1"/><path d="M7.6 1.4v3.2h3.2" fill="none" stroke="#b89a4a" stroke-width="0.8"/><path d="M2.6 13h6.6v-6.6z" fill="#111"/></svg>
<div class="t " style="left:661.4px;top:116px;letter-spacing:0.078px;">list_objects [selection of 'String']</div>
<div class="b" style="left:851px;top:113px;width:1px;height:19px;background:#a0a7b4;"></div>
<div class="b" style="left:567px;top:158px;width:96px;height:290px;background:#f5f5f5;"></div>
<div class="b" style="left:182px;top:284px;width:603px;height:20px;background:#e5f3fb;"></div>
<div class="b" style="left:567px;top:284px;width:96px;height:20px;background:#dbe9f1;"></div>
<div class="b" style="left:182px;top:178px;width:960px;height:1px;background:#ededed;"></div>
<div class="b" style="left:182px;top:199px;width:960px;height:1px;background:#ededed;"></div>
<div class="b" style="left:182px;top:220px;width:960px;height:1px;background:#ededed;"></div>
<div class="b" style="left:182px;top:241px;width:960px;height:1px;background:#ededed;"></div>
<div class="b" style="left:182px;top:262px;width:960px;height:1px;background:#ededed;"></div>
<div class="b" style="left:182px;top:283px;width:960px;height:1px;background:#ededed;"></div>
<div class="b" style="left:182px;top:304px;width:960px;height:1px;background:#ededed;"></div>
<div class="b" style="left:182px;top:325px;width:960px;height:1px;background:#ededed;"></div>
<div class="b" style="left:182px;top:346px;width:960px;height:1px;background:#ededed;"></div>
<div class="b" style="left:182px;top:367px;width:960px;height:1px;background:#ededed;"></div>
<div class="b" style="left:182px;top:388px;width:960px;height:1px;background:#ededed;"></div>
<div class="b" style="left:182px;top:409px;width:960px;height:1px;background:#ededed;"></div>
<div class="b" style="left:182px;top:430px;width:960px;height:1px;background:#ededed;"></div>
<div class="b" style="left:491px;top:134px;width:1px;height:310px;background:#e3e9f2;"></div>
<div class="b" style="left:566px;top:134px;width:1px;height:310px;background:#e3e9f2;"></div>
<div class="b" style="left:663px;top:134px;width:1px;height:310px;background:#e3e9f2;"></div>
<div class="b" style="left:785px;top:134px;width:1px;height:310px;background:#e3e9f2;"></div>
<div class="t " style="left:187.4px;top:138px;letter-spacing:-0.051px;">Class Name</div>
<div class="t " style="left:516.4px;top:138px;letter-spacing:0.032px;">Objects</div>
<div class="t " style="left:578.4px;top:138px;letter-spacing:-0.079px;">Shallow Heap</div>
<div class="t " style="left:693.4px;top:138px;letter-spacing:-0.036px;">Retained Heap</div>
<svg class="ic" style="left:612px;top:134.6px" width="8" height="5" viewBox="0 0 8 5"><path d="M0.5 0.5l3.3 3.2l3.3-3.2" fill="none" stroke="#8a8a8a" stroke-width="1"/></svg>
<svg class="ic" style="left:186px;top:160px" width="16" height="16" viewBox="0 0 16 16"><path d="M0 3.2h5" stroke="#3f7ab8" stroke-width="1"/><path d="M4.4 1.2l2.6 2l-2.6 2M9.5 1v4.6" stroke="#3a4658" stroke-width="1" fill="none"/><path d="M0 13.3h5" stroke="#3f7ab8" stroke-width="1"/><path d="M4.4 11.3l2.6 2l-2.6 2M9.5 11v4.6" stroke="#3a4658" stroke-width="1" fill="none"/><path d="M4.4 8.4l2-1.6h5.4v-1.8l4.2 3.4l-4.2 3.4v-1.8h-5.4z" fill="#fffdf0" stroke="#c8921e" stroke-width="1"/><path d="M6.4 8.4h7" stroke="#f0d080" stroke-width="0.8"/></svg>
<div class="t g" style="left:204.4px;top:161px;letter-spacing:0.074px;">&lt;Regex&gt;</div>
<div class="t g" style="left:499.4px;top:161px;letter-spacing:-0.003px;">&lt;Numeri...</div>
<div class="t g" style="left:589.4px;top:161px;letter-spacing:0.190px;">&lt;Numeric&gt;</div>
<div class="t g" style="left:711.4px;top:161px;letter-spacing:0.190px;">&lt;Numeric&gt;</div>
<svg class="ic" style="left:187px;top:182px" width="13" height="13" viewBox="0 0 13 13"><circle cx="6.5" cy="6.5" r="6.1" fill="#3c9c3c" stroke="#2c7a48" stroke-width="0.8"/><text x="6.3" y="10.1" font-family="Liberation Sans, sans-serif" font-weight="bold" font-size="9.9" fill="#fff" stroke="#fff" stroke-width="0.25" text-anchor="middle" textLength="6.3" lengthAdjust="spacingAndGlyphs">C</text></svg>
<div class="t " style="left:203.8px;top:182px;letter-spacing:0.181px;">char[]</div>
<div class="t " style="right:575.8px;top:182px;text-align:right;letter-spacing:-0.3px;">2,958</div>
<div class="t " style="right:479px;top:182px;text-align:right;letter-spacing:-0.3px;">425,840</div>
<div class="t " style="right:357px;top:182px;text-align:right;letter-spacing:-0.3px;"><span style="letter-spacing:0.9px">&gt;= </span>425,840</div>
<svg class="ic" style="left:187px;top:203px" width="13" height="13" viewBox="0 0 13 13"><circle cx="6.5" cy="6.5" r="6.1" fill="#3c9c3c" stroke="#2c7a48" stroke-width="0.8"/><text x="6.3" y="10.1" font-family="Liberation Sans, sans-serif" font-weight="bold" font-size="9.9" fill="#fff" stroke="#fff" stroke-width="0.25" text-anchor="middle" textLength="6.3" lengthAdjust="spacingAndGlyphs">C</text></svg>
<div class="t " style="left:203.8px;top:203px;letter-spacing:-0.031px;">java.lang.String[]</div>
<div class="t " style="right:575.8px;top:203px;text-align:right;letter-spacing:-0.3px;">206</div>
<div class="t " style="right:479px;top:203px;text-align:right;letter-spacing:-0.3px;">106,136</div>
<div class="t " style="right:357px;top:203px;text-align:right;letter-spacing:-0.3px;"><span style="letter-spacing:0.9px">&gt;= </span>170,272</div>
<svg class="ic" style="left:187px;top:224px" width="13" height="13" viewBox="0 0 13 13"><circle cx="6.5" cy="6.5" r="6.1" fill="#3c9c3c" stroke="#2c7a48" stroke-width="0.8"/><text x="6.3" y="10.1" font-family="Liberation Sans, sans-serif" font-weight="bold" font-size="9.9" fill="#fff" stroke="#fff" stroke-width="0.25" text-anchor="middle" textLength="6.3" lengthAdjust="spacingAndGlyphs">C</text></svg>
<div class="t " style="left:203.8px;top:224px;letter-spacing:-0.109px;">java.lang.String</div>
<div class="t " style="right:575.8px;top:224px;text-align:right;letter-spacing:-0.3px;">2,808</div>
<div class="t " style="right:479px;top:224px;text-align:right;letter-spacing:-0.3px;">67,392</div>
<div class="t " style="right:357px;top:224px;text-align:right;letter-spacing:-0.3px;"><span style="letter-spacing:0.9px">&gt;= </span>333,096</div>
<svg class="ic" style="left:187px;top:245px" width="13" height="13" viewBox="0 0 13 13"><circle cx="6.5" cy="6.5" r="6.1" fill="#3c9c3c" stroke="#2c7a48" stroke-width="0.8"/><text x="6.3" y="10.1" font-family="Liberation Sans, sans-serif" font-weight="bold" font-size="9.9" fill="#fff" stroke="#fff" stroke-width="0.25" text-anchor="middle" textLength="6.3" lengthAdjust="spacingAndGlyphs">C</text></svg>
<div class="t " style="left:203.8px;top:245px;letter-spacing:0.301px;">byte[]</div>
<div class="t " style="right:575.8px;top:245px;text-align:right;letter-spacing:-0.3px;">67</div>
<div class="t " style="right:479px;top:245px;text-align:right;letter-spacing:-0.3px;">34,576</div>
<div class="t " style="right:357px;top:245px;text-align:right;letter-spacing:-0.3px;"><span style="letter-spacing:0.9px">&gt;= </span>34,576</div>
<svg class="ic" style="left:187px;top:266px" width="13" height="13" viewBox="0 0 13 13"><circle cx="6.5" cy="6.5" r="6.1" fill="#3c9c3c" stroke="#2c7a48" stroke-width="0.8"/><text x="6.3" y="10.1" font-family="Liberation Sans, sans-serif" font-weight="bold" font-size="9.9" fill="#fff" stroke="#fff" stroke-width="0.25" text-anchor="middle" textLength="6.3" lengthAdjust="spacingAndGlyphs">C</text></svg>
<div class="t " style="left:203.8px;top:266px;letter-spacing:-0.062px;">java.util.TreeMap$Entry</div>
<div class="t " style="right:575.8px;top:266px;text-align:right;letter-spacing:-0.3px;">791</div>
<div class="t " style="right:479px;top:266px;text-align:right;letter-spacing:-0.3px;">31,640</div>
<div class="t " style="right:357px;top:266px;text-align:right;letter-spacing:-0.3px;"><span style="letter-spacing:0.9px">&gt;= </span>40,704</div>
<svg class="ic" style="left:187px;top:287px" width="13" height="13" viewBox="0 0 13 13"><circle cx="6.5" cy="6.5" r="6.1" fill="#3c9c3c" stroke="#2c7a48" stroke-width="0.8"/><text x="6.3" y="10.1" font-family="Liberation Sans, sans-serif" font-weight="bold" font-size="9.9" fill="#fff" stroke="#fff" stroke-width="0.25" text-anchor="middle" textLength="6.3" lengthAdjust="spacingAndGlyphs">C</text></svg>
<div class="t " style="left:203.8px;top:287px;letter-spacing:-0.060px;">java.util.LinkedList$Node</div>
<div class="t " style="right:575.8px;top:287px;text-align:right;letter-spacing:-0.3px;">800</div>
<div class="t " style="right:479px;top:287px;text-align:right;letter-spacing:-0.3px;">19,200</div>
<div class="t " style="right:357px;top:287px;text-align:right;letter-spacing:-0.3px;"><span style="letter-spacing:0.9px">&gt;= </span>19,200</div>
<svg class="ic" style="left:187px;top:308px" width="13" height="13" viewBox="0 0 13 13"><circle cx="6.5" cy="6.5" r="6.1" fill="#3c9c3c" stroke="#2c7a48" stroke-width="0.8"/><text x="6.3" y="10.1" font-family="Liberation Sans, sans-serif" font-weight="bold" font-size="9.9" fill="#fff" stroke="#fff" stroke-width="0.25" text-anchor="middle" textLength="6.3" lengthAdjust="spacingAndGlyphs">C</text></svg>
<div class="t " style="left:203.8px;top:308px;letter-spacing:-0.026px;">java.lang.Object[]</div>
<div class="t " style="right:575.8px;top:308px;text-align:right;letter-spacing:-0.3px;">367</div>
<div class="t " style="right:479px;top:308px;text-align:right;letter-spacing:-0.3px;">17,696</div>
<div class="t " style="right:357px;top:308px;text-align:right;letter-spacing:-0.3px;"><span style="letter-spacing:0.9px">&gt;= </span>24,864</div>
<svg class="ic" style="left:187px;top:329px" width="13" height="13" viewBox="0 0 13 13"><circle cx="6.5" cy="6.5" r="6.1" fill="#3c9c3c" stroke="#2c7a48" stroke-width="0.8"/><text x="6.3" y="10.1" font-family="Liberation Sans, sans-serif" font-weight="bold" font-size="9.9" fill="#fff" stroke="#fff" stroke-width="0.25" text-anchor="middle" textLength="6.3" lengthAdjust="spacingAndGlyphs">C</text></svg>
<div class="t " style="left:203.8px;top:329px;letter-spacing:-0.129px;">com.wzh.jvm.MemoryLeakwForThreadLocal$1</div>
<div class="t " style="right:575.8px;top:329px;text-align:right;letter-spacing:-0.3px;">130</div>
<div class="t " style="right:479px;top:329px;text-align:right;letter-spacing:-0.3px;">16,640</div>
<div class="t " style="right:357px;top:329px;text-align:right;letter-spacing:-0.3px;"><span style="letter-spacing:0.9px">&gt;= </span>133,536</div>
<svg class="ic" style="left:187px;top:350px" width="13" height="13" viewBox="0 0 13 13"><circle cx="6.5" cy="6.5" r="6.1" fill="#3c9c3c" stroke="#2c7a48" stroke-width="0.8"/><text x="6.3" y="10.1" font-family="Liberation Sans, sans-serif" font-weight="bold" font-size="9.9" fill="#fff" stroke="#fff" stroke-width="0.25" text-anchor="middle" textLength="6.3" lengthAdjust="spacingAndGlyphs">C</text></svg>
<div class="t " style="left:203.8px;top:350px;letter-spacing:0.041px;">java.util.HashMap$Node</div>
<div class="t " style="right:575.8px;top:350px;text-align:right;letter-spacing:-0.3px;">508</div>
<div class="t " style="right:479px;top:350px;text-align:right;letter-spacing:-0.3px;">16,256</div>
<div class="t " style="right:357px;top:350px;text-align:right;letter-spacing:-0.3px;"><span style="letter-spacing:0.9px">&gt;= </span>69,224</div>
<svg class="ic" style="left:187px;top:371px" width="13" height="13" viewBox="0 0 13 13"><circle cx="6.5" cy="6.5" r="6.1" fill="#3c9c3c" stroke="#2c7a48" stroke-width="0.8"/><text x="6.3" y="10.1" font-family="Liberation Sans, sans-serif" font-weight="bold" font-size="9.9" fill="#fff" stroke="#fff" stroke-width="0.25" text-anchor="middle" textLength="6.3" lengthAdjust="spacingAndGlyphs">C</text></svg>
<div class="t " style="left:203.8px;top:371px;letter-spacing:-0.143px;">java.util.LinkedList</div>
<div class="t " style="right:575.8px;top:371px;text-align:right;letter-spacing:-0.3px;">404</div>
<div class="t " style="right:479px;top:371px;text-align:right;letter-spacing:-0.3px;">12,928</div>
<div class="t " style="right:357px;top:371px;text-align:right;letter-spacing:-0.3px;"><span style="letter-spacing:0.9px">&gt;= </span>32,136</div>
<svg class="ic" style="left:187px;top:392px" width="13" height="13" viewBox="0 0 13 13"><circle cx="6.5" cy="6.5" r="6.1" fill="#3c9c3c" stroke="#2c7a48" stroke-width="0.8"/><text x="6.3" y="10.1" font-family="Liberation Sans, sans-serif" font-weight="bold" font-size="9.9" fill="#fff" stroke="#fff" stroke-width="0.25" text-anchor="middle" textLength="6.3" lengthAdjust="spacingAndGlyphs">C</text></svg>
<div class="t " style="left:203.8px;top:392px;letter-spacing:-0.373px;">java.net.URL</div>
<div class="t " style="right:575.8px;top:392px;text-align:right;letter-spacing:-0.3px;">146</div>
<div class="t " style="right:479px;top:392px;text-align:right;letter-spacing:-0.3px;">9,344</div>
<div class="t " style="right:357px;top:392px;text-align:right;letter-spacing:-0.3px;"><span style="letter-spacing:0.9px">&gt;= </span>42,120</div>
<svg class="ic" style="left:187px;top:413px" width="13" height="13" viewBox="0 0 13 13"><circle cx="6.5" cy="6.5" r="6.1" fill="#3c9c3c" stroke="#2c7a48" stroke-width="0.8"/><text x="6.3" y="10.1" font-family="Liberation Sans, sans-serif" font-weight="bold" font-size="9.9" fill="#fff" stroke="#fff" stroke-width="0.25" text-anchor="middle" textLength="6.3" lengthAdjust="spacingAndGlyphs">C</text></svg>
<div class="t " style="left:203.8px;top:413px;letter-spacing:-0.246px;">java.lang.Class</div>
<div class="t " style="right:575.8px;top:413px;text-align:right;letter-spacing:-0.3px;">600</div>
<div class="t " style="right:479px;top:413px;text-align:right;letter-spacing:-0.3px;">7,008</div>
<div class="t " style="right:357px;top:413px;text-align:right;letter-spacing:-0.3px;"><span style="letter-spacing:0.9px">&gt;= </span>352,984</div>
<svg class="ic" style="left:187px;top:434px" width="13" height="13" viewBox="0 0 13 13"><circle cx="6.5" cy="6.5" r="6.1" fill="#3c9c3c" stroke="#2c7a48" stroke-width="0.8"/><text x="6.3" y="10.1" font-family="Liberation Sans, sans-serif" font-weight="bold" font-size="9.9" fill="#fff" stroke="#fff" stroke-width="0.25" text-anchor="middle" textLength="6.3" lengthAdjust="spacingAndGlyphs">C</text></svg>
<div class="t " style="left:203.8px;top:434px;letter-spacing:-0.042px;">java.util.HashMap$Node[]</div>
<div class="t " style="right:575.8px;top:434px;text-align:right;letter-spacing:-0.3px;">86</div>
<div class="t " style="right:479px;top:434px;text-align:right;letter-spacing:-0.3px;">6,096</div>
<div class="t " style="right:357px;top:434px;text-align:right;letter-spacing:-0.3px;"><span style="letter-spacing:0.9px">&gt;= </span>73,368</div>
<div class="b" style="left:176px;top:217px;width:614px;height:30px;border:5px solid #ed1c24;box-sizing:border-box"></div>
<div class="t" style="left:800px;top:224px;font-size:16px;line-height:20px;height:20px;color:#ee2a33;letter-spacing:0.4px">67392÷2808=24</div>
</body></html>
